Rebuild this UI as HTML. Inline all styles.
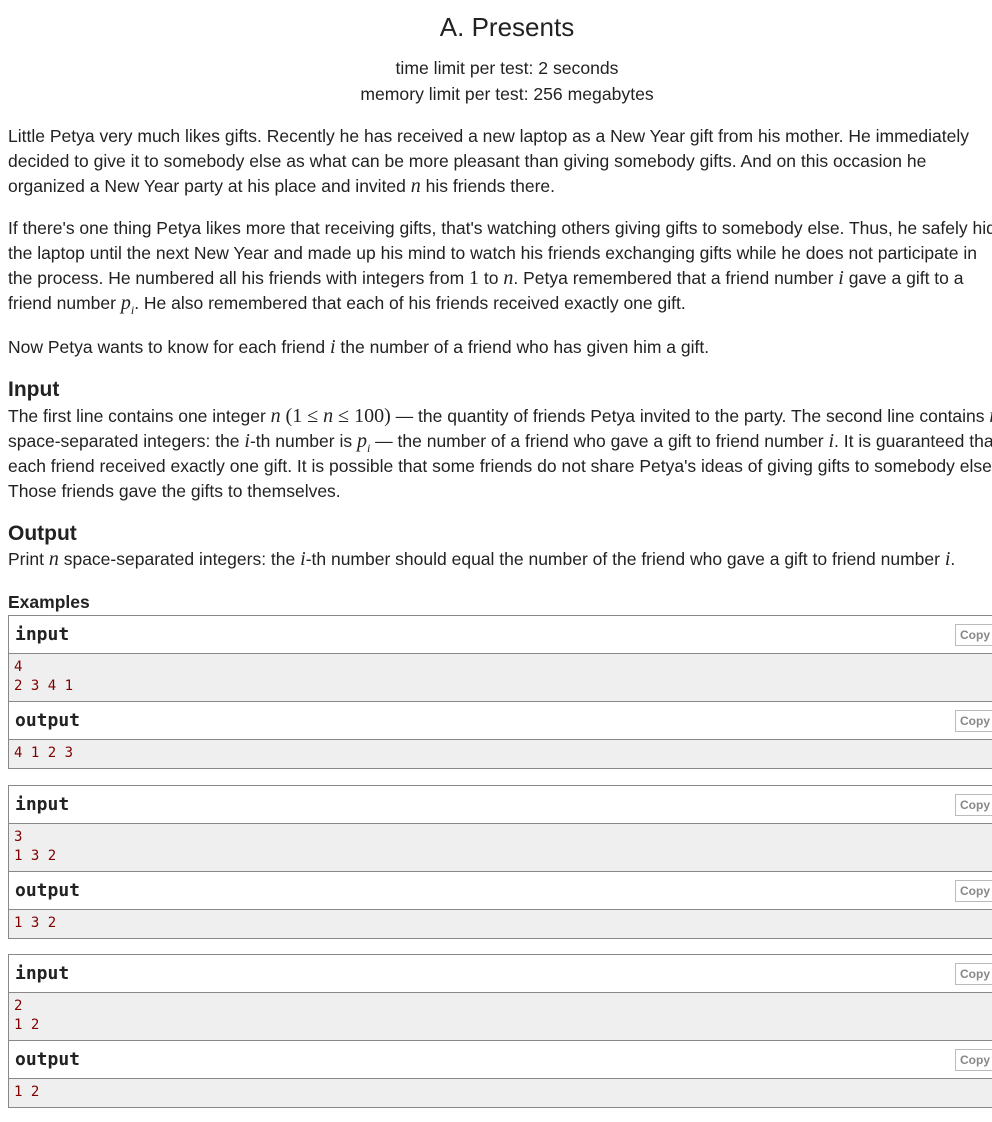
<!DOCTYPE html>
<html><head><meta charset="utf-8"><style>
body{margin:0;width:992px;height:1122px;overflow:hidden;background:#fff;font-family:"Liberation Sans",sans-serif;color:#222;position:relative}
.l{position:absolute;left:8px;white-space:nowrap;font-size:17.5px;line-height:20px}
.m{font-family:"Liberation Serif",serif;font-style:italic;font-size:20px}
.r{font-family:"Liberation Serif",serif;font-size:20px}
.c{position:absolute;left:0;width:1014px;text-align:center;white-space:nowrap}
.h{position:absolute;left:8px;font-weight:bold;font-size:21px}
.box{position:absolute;left:8px;width:1000px;border:1px solid #888;border-right:none}
.t{height:37px;border-bottom:1px solid #888;position:relative;font-family:"DejaVu Sans Mono","Liberation Mono",monospace;font-weight:bold;font-size:18px;line-height:37px;padding-left:6px}
.g{background:#efefef;border-bottom:1px solid #888;font-family:"DejaVu Sans Mono","Liberation Mono",monospace;font-size:14px;color:#800000;line-height:19px;padding:4px 5px 5px}
.g:last-child{border-bottom:none}
.cp{position:absolute;left:946px;top:8px;width:40px;height:20px;border:1px solid #bbb;font-family:"Liberation Sans",sans-serif;font-size:12px;font-weight:bold;color:#888;line-height:20px;padding-left:4px}
</style></head><body>
<div class="c" style="top:12px;font-size:26px;line-height:30px">A. Presents</div>
<div class="c" style="top:58px;font-size:17.6px">time limit per test: 2 seconds</div>
<div class="c" style="top:84px;font-size:17.6px">memory limit per test: 256 megabytes</div>

<div class="l" style="top:126px">Little Petya very much likes gifts. Recently he has received a new laptop as a New Year gift from his mother. He immediately</div>
<div class="l" style="top:151px">decided to give it to somebody else as what can be more pleasant than giving somebody gifts. And on this occasion he</div>
<div class="l" style="top:176px">organized a New Year party at his place and invited <span class="m">n</span> his friends there.</div>

<div class="l" style="top:218px">If there's one thing Petya likes more that receiving gifts, that's watching others giving gifts to somebody else. Thus, he safely hid</div>
<div class="l" style="top:243px">the laptop until the next New Year and made up his mind to watch his friends exchanging gifts while he does not participate in</div>
<div class="l" style="top:268px">the process. He numbered all his friends with integers from <span class="r">1</span> to <span class="m">n</span>. Petya remembered that a friend number <span class="m">i</span> gave a gift to a</div>
<div class="l" style="top:293px">friend number <span class="m">p<sub style="font-size:12px">i</sub></span>. He also remembered that each of his friends received exactly one gift.</div>

<div class="l" style="top:337px">Now Petya wants to know for each friend <span class="m">i</span> the number of a friend who has given him a gift.</div>

<div class="h" style="top:378px">Input</div>
<div class="l" style="top:406px">The first line contains one integer <span class="m">n</span> <span class="r">(1 ≤ <i>n</i> ≤ 100)</span> — the quantity of friends Petya invited to the party. The second line contains <span class="m">n</span></div>
<div class="l" style="top:431px">space-separated integers: the <span class="m">i</span>-th number is <span class="m">p<sub style="font-size:12px">i</sub></span> — the number of a friend who gave a gift to friend number <span class="m">i</span>. It is guaranteed that</div>
<div class="l" style="top:456px">each friend received exactly one gift. It is possible that some friends do not share Petya's ideas of giving gifts to somebody else.</div>
<div class="l" style="top:481px">Those friends gave the gifts to themselves.</div>

<div class="h" style="top:522px">Output</div>
<div class="l" style="top:549px">Print <span class="m">n</span> space-separated integers: the <span class="m">i</span>-th number should equal the number of the friend who gave a gift to friend number <span class="m">i</span>.</div>

<div class="h" style="top:592px;font-size:17.5px">Examples</div>

<div class="box" style="top:615px">
<div class="t">input<div class="cp">Copy</div></div>
<div class="g">4<br>2 3 4 1</div>
<div class="t">output<div class="cp">Copy</div></div>
<div class="g">4 1 2 3</div>
</div>
<div class="box" style="top:785px">
<div class="t">input<div class="cp">Copy</div></div>
<div class="g">3<br>1 3 2</div>
<div class="t">output<div class="cp">Copy</div></div>
<div class="g">1 3 2</div>
</div>
<div class="box" style="top:954px">
<div class="t">input<div class="cp">Copy</div></div>
<div class="g">2<br>1 2</div>
<div class="t">output<div class="cp">Copy</div></div>
<div class="g">1 2</div>
</div>
</body></html>
